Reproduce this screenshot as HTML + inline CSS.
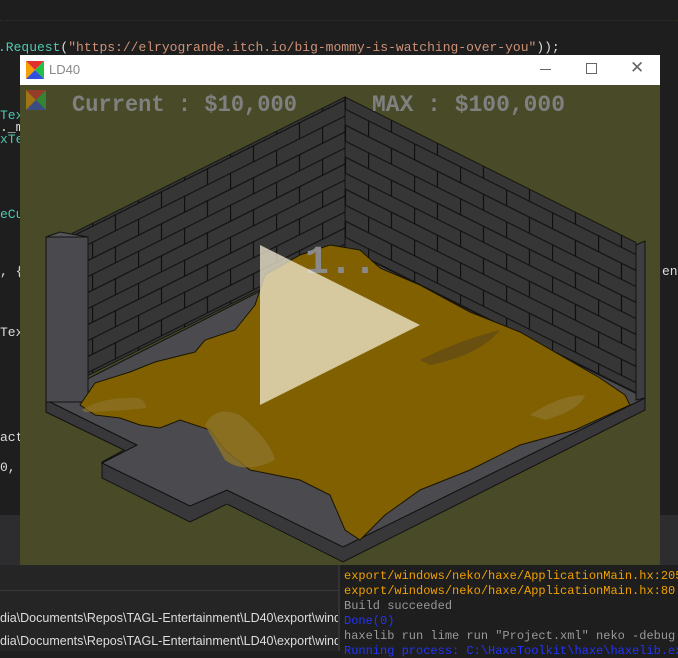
<!DOCTYPE html>
<html><head><meta charset="utf-8"><style>
body{margin:0;width:678px;height:651px;overflow:hidden;background:#1e1e1e;font-family:"Liberation Mono",monospace;position:relative}
.t{position:absolute;white-space:pre;font-size:13px}
</style></head><body>
<div style="position:absolute;left:0;top:20px;width:678px;height:1px;border-top:1px dotted #3a3020"></div>
<div class="t" style="left:-2px;top:40px;color:#ddd"><span style="color:#4ec9b0">.Request</span>(<span style="color:#ce9178">"https://elryogrande.itch.io/big-mommy-is-watching-over-you"</span>));</div>
<div class="t" style="left:0;top:108px;color:#4ec9b0">Text</div>
<div class="t" style="left:0;top:120px;color:#ddd">._m</div>
<div class="t" style="left:0;top:132px;color:#4ec9b0">xTe</div>
<div class="t" style="left:0;top:207px;color:#4ec9b0">eCu</div>
<div class="t" style="left:0;top:264px;color:#ddd">, {</div>
<div class="t" style="left:0;top:325px;color:#ddd">Text</div>
<div class="t" style="left:0;top:430px;color:#ddd">act</div>
<div class="t" style="left:0;top:460px;color:#ddd">0,</div>
<div class="t" style="left:662px;top:264px;color:#ddd">ent</div>
<div style="position:absolute;left:0;top:515px;width:678px;height:50px;background:#2d2d30"></div>
<div style="position:absolute;left:0;top:565px;width:340px;height:86px;background:#252526"></div>
<div style="position:absolute;left:0;top:590px;width:340px;height:1px;background:#3a3a3a"></div>
<div class="t" style="left:0;top:611px;color:#ddd;font-family:'Liberation Sans';font-size:12.5px">dia\Documents\Repos\TAGL-Entertainment\LD40\export\windo</div>
<div class="t" style="left:0;top:634px;color:#ddd;font-family:'Liberation Sans';font-size:12.5px">dia\Documents\Repos\TAGL-Entertainment\LD40\export\windo</div>
<div style="position:absolute;left:338px;top:565px;width:340px;height:86px;background:#1e1e1e;border-left:2px solid #333"></div>
<div class="t" style="left:344px;top:569px;color:#f0a000;font-size:12px">export/windows/neko/haxe/ApplicationMain.hx:205:</div>
<div class="t" style="left:344px;top:584px;color:#f0a000;font-size:12px">export/windows/neko/haxe/ApplicationMain.hx:80:</div>
<div class="t" style="left:344px;top:599px;color:#999;font-size:12px">Build succeeded</div>
<div class="t" style="left:344px;top:614px;color:#2233ff;font-size:12px">Done(0)</div>
<div class="t" style="left:344px;top:629px;color:#999;font-size:12px">haxelib run lime run "Project.xml" neko -debug</div>
<div class="t" style="left:344px;top:644px;color:#2233ff;font-size:12px">Running process: C:\HaxeToolkit\haxe\haxelib.exe</div>

<div style="position:absolute;left:20px;top:55px;width:640px;height:30px;background:#fff"></div>
<svg style="position:absolute;left:26px;top:61px" width="18" height="18" viewBox="0 0 18 18"><polygon points="0,0 9,9 0,18" fill="#f5a000"/><polygon points="0,0 18,0 9,9" fill="#e03030"/><polygon points="18,0 18,18 9,9" fill="#20c040"/><polygon points="0,18 18,18 9,9" fill="#3050e0"/></svg>
<div class="t" style="left:49px;top:62px;font-family:'Liberation Sans';font-size:13px;color:#888">LD40</div>
<div style="position:absolute;left:540px;top:69px;width:11px;height:1px;background:#666"></div>
<div style="position:absolute;left:586px;top:63px;width:9px;height:9px;border:1px solid #666"></div>
<div class="t" style="left:630px;top:58px;font-family:'Liberation Sans';font-size:17px;color:#666">✕</div>

<svg style="position:absolute;left:20px;top:85px" width="640" height="480" viewBox="20 85 640 480">
<defs>
<pattern id="br" width="46" height="32" patternUnits="userSpaceOnUse">
<rect width="46" height="32" fill="#363636"/>
<path d="M0,0.5H46M0,16.5H46M0.5,0V16M23.5,16V32" stroke="#0e0e0e" stroke-width="1.2"/>
</pattern>
</defs>
<rect x="20" y="85" width="640" height="480" fill="#494a27"/>
<!-- floor side (thickness) -->
<polygon points="46,400 46,412 124,450 102,462 102,478 190,522 227,504 343,562 645,410 645,398 343,547 227,490 190,506 102,463 137,445" fill="#38383a" stroke="#111"/>
<!-- floor top -->
<polygon points="46,400 345,248 645,398 343,547 227,490 190,506 102,463 137,445" fill="#4b4b4f" stroke="#111"/>
<!-- walls -->
<g transform="matrix(1,-0.5,0,1,0,0)">
<rect x="72" y="269.5" width="273" height="150" fill="url(#br)" stroke="#111"/>
</g>
<g transform="matrix(1,0.5,0,1,0,0)">
<rect x="345" y="-75.5" width="291" height="150" fill="url(#br)" stroke="#111"/>
</g>
<polygon points="636,245 645,241 645,398 636,400" fill="#3e3e40" stroke="#111"/>
<!-- pillar -->
<polygon points="46,237 60,232 88,237 88,400 46,400" fill="#555558" stroke="#111"/>
<polygon points="46,237 88,237 88,402 46,402" fill="#4a4a4e" stroke="#111"/>
<!-- sand -->
<path d="M80,405 L95,383 L130,372 L155,362 L195,352 L205,340 L235,330 L255,305 L265,275 L300,255 L330,245 L360,250 L380,268 L420,285 L470,312 L520,332 L560,355 L600,378 L625,395 L630,405 L575,430 L520,445 L470,470 L420,490 L385,515 L360,540 L345,530 L330,495 L300,480 L250,470 L225,450 L210,430 L180,420 L160,428 L140,425 L120,418 L95,415 Z" fill="#806000" stroke="#1a1400"/>
<path d="M82,410 Q100,398 130,398 Q145,396 146,408 Q110,412 85,412 Z" fill="#8d7328" opacity=".7"/>
<path d="M205,425 Q215,405 240,415 Q270,440 275,460 Q245,475 225,460 Z" fill="#8d7328" opacity=".8"/>
<path d="M420,360 Q460,340 500,330 Q480,355 430,365 Z" fill="#6a5010"/>
<path d="M530,415 Q560,395 585,395 Q580,410 545,420 Z" fill="#8d7328" opacity=".8"/>
<text x="305" y="273" font-family="Liberation Mono" font-weight="bold" font-size="40" fill="#8a8a8a">1..</text>
<polygon points="260,245 260,405 420,325" fill="#f4ecd4" opacity=".75"/>
<text x="72" y="111" font-family="Liberation Mono" font-weight="bold" font-size="23" fill="#808080" textLength="225" lengthAdjust="spacingAndGlyphs">Current : $10,000</text>
<text x="372" y="111" font-family="Liberation Mono" font-weight="bold" font-size="23" fill="#808080" textLength="193" lengthAdjust="spacingAndGlyphs">MAX : $100,000</text>
<g opacity=".5"><polygon points="26,90 36,100 26,110" fill="#f5a000"/><polygon points="26,90 46,90 36,100" fill="#e03030"/><polygon points="46,90 46,110 36,100" fill="#20c040"/><polygon points="26,110 46,110 36,100" fill="#3050e0"/></g>
</svg>
</body></html>
